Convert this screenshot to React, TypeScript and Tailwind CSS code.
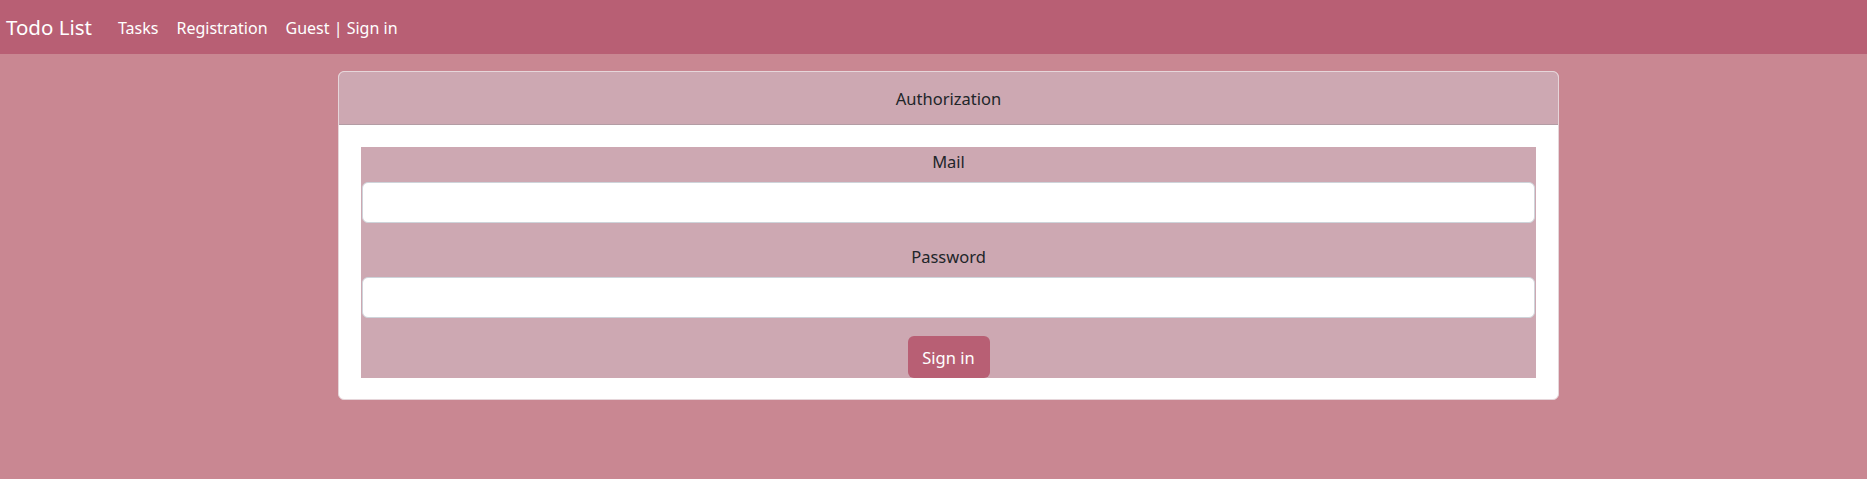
import React from "react";

export default function App() {
  return (
    <div
      className="min-h-[479px] w-full bg-[#c98792] text-[#212529]"
      style={{ fontFamily: '"Noto Sans", "Open Sans", sans-serif' }}
    >
      <nav className="flex h-[54px] items-center bg-[#b85f74] pl-[6px] text-white">
        <span className="mr-[26px] text-[20.5px] leading-[30px]">Todo List</span>
        <div className="flex items-center gap-[18px] pt-[2px] text-[16px] leading-[24px]">
          <span>Tasks</span>
          <span>Registration</span>
          <span>Guest | Sign in</span>
        </div>
      </nav>
      <div className="pl-[338px] pt-[17px]">
        <div className="w-[1221px] overflow-hidden rounded-[6px] border border-[#e6d6da] bg-white">
          <div className="flex h-[53px] items-center justify-center border-b border-[#b39ca4] bg-[#cda8b2] pt-[2px] text-[16.5px]">
            Authorization
          </div>
          <div className="px-[22px] pb-[21px] pt-[22px]">
            <div className="flex flex-col bg-[#cda8b2] px-[1px] pt-[1px]">
              <label className="pt-[4px] text-center text-[16.5px] leading-[20px]">Mail</label>
              <input className="mt-[10px] h-[41px] rounded-[6px] border border-[#ced4da] bg-white" />
              <label className="mt-[20px] pt-[4px] text-center text-[16.5px] leading-[20px]">Password</label>
              <input
                type="password"
                className="mt-[10px] h-[41px] rounded-[6px] border border-[#ced4da] bg-white"
              />
              <div className="mt-[18px] flex justify-center">
                <button className="h-[42px] w-[82px] rounded-[6px] bg-[#b85f74] pt-[3px] text-[16.5px] text-white">
                  Sign in
                </button>
              </div>
            </div>
          </div>
        </div>
      </div>
    </div>
  );
}
